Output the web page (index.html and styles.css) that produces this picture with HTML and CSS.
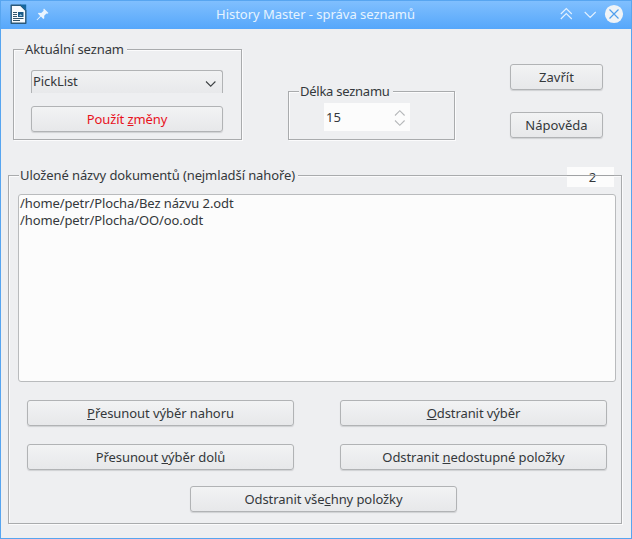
FILE: index.html
```html
<!DOCTYPE html>
<html lang="cs">
<head>
<meta charset="utf-8">
<title>History Master - správa seznamů</title>
<link rel="stylesheet" href="styles.css">
</head>
<body>
<div class="window">
  <header class="titlebar">
    <svg class="app-icon" width="17" height="21" viewBox="0 0 17 21">
      <path d="M1.200 1.200H10.500L15.800 6.500V19.300H1.200Z" fill="#f8fbfd" stroke="#2a5878" stroke-width="1.400" stroke-linejoin="round"/>
      <path d="M10 .5H16.200V6.800Z" fill="#15679f"/>
      <path d="M3 8.500H7M3 10.500H7M3 12.500H7M3 14.500H13.500M3 16.500H10" stroke="#34566c" stroke-width="1"/>
      <rect x="8" y="8" width="5.500" height="5" fill="#1b5a85"/>
      <path d="M9 12L10.500 10L12.500 12Z" fill="#8fc0df"/>
    </svg>
    <svg class="pin" width="13" height="13" viewBox="0 0 13 13" fill="#e9f4ff">
      <path d="M8 .5L12.500 5L11.300 5.700L10.400 5.400L8.200 7.700L8.300 10.300L7.300 11L4.900 8.600L1.200 12.300L.6 11.700L4.200 7.900L1.900 5.500L2.700 4.700L5.200 4.900L7.600 2.700L7.300 1.500Z"/>
    </svg>
    <h1 class="title">History Master - správa seznamů</h1>
    <svg class="controls" width="64" height="20" viewBox="0 0 64 20" fill="none">
      <path d="M.8 10L6.300 4.500L11.800 10M.8 15L6.300 9.500L11.800 15M24.700 8L30.200 13.500L35.700 8" stroke="#e3f1ff" stroke-width="1.100"/>
      <circle cx="54" cy="10" r="9.100" fill="#eff3f7"/>
      <path d="M49.500 5.500L58.500 14.500M58.500 5.500L49.500 14.500" stroke="#519fee" stroke-width="1.200"/>
    </svg>
  </header>
  <main>
    <div class="top">
      <section class="group current">
        <h2 class="legend">Aktuální seznam</h2>
        <div class="combo"><span>PickList</span>
          <svg width="12" height="8" viewBox="0 0 12 8"><path d="M1 1.500L5.700 6.200L10.400 1.500" fill="none" stroke="#3c4043" stroke-width="1.100"/></svg>
        </div>
        <button class="btn apply">Použít <u>z</u>měny</button>
      </section>
      <section class="group length">
        <h2 class="legend">Délka seznamu</h2>
        <div class="spin"><span>15</span>
          <svg width="12" height="18" viewBox="0 0 12 18"><path d="M1 6.500L5.800 1.700L10.600 6.500M1 11.500L5.800 16.300L10.600 11.500" fill="none" stroke="#b5b7b9" stroke-width="1.100"/></svg>
        </div>
      </section>
      <div class="side">
        <button class="btn">Zavřít</button>
        <button class="btn">Nápověda</button>
      </div>
    </div>
    <section class="group stored">
      <h2 class="legend">Uložené názvy dokumentů (nejmladší nahoře)</h2>
      <output class="count">2</output>
      <ul class="list">
        <li>/home/petr/Plocha/Bez názvu 2.odt</li>
        <li>/home/petr/Plocha/OO/oo.odt</li>
      </ul>
      <div class="actions">
        <button class="btn"><u>P</u>řesunout výběr nahoru</button>
        <button class="btn"><u>O</u>dstranit výběr</button>
        <button class="btn">Přesunout <u>v</u>ýběr dolů</button>
        <button class="btn">Odstranit <u>n</u>edostupné položky</button>
      </div>
      <button class="btn all">Odstranit vše<u>c</u>hny položky</button>
    </section>
  </main>
</div>
</body>
</html>
```
FILE: styles.css
```css
* { box-sizing: border-box; }
body {
  margin: 0;
  font: 13px/17px "Noto Sans", sans-serif;
  letter-spacing: -0.1px;
  color: #34383b;
}
.window {
  width: 632px;
  height: 539px;
  background: #eeeff1;
  border: 1px solid #57a5f0;
  overflow: hidden;
}
.titlebar {
  height: 28px;
  display: flex;
  align-items: flex-start;
  background: linear-gradient(#80bffe, #56a7fb);
  color: #e6f3ff;
}
.app-icon { margin: 3px 0 0 9px; }
.pin { margin: 7px 0 0 9px; }
.title {
  flex: 1;
  margin: 4px 0 0 2px;
  padding-left: 20px;
  text-align: center;
  font-size: 13px;
  line-height: 18px;
  font-weight: 400;
  letter-spacing: -0.03px;
}
.controls { margin: 3px 7px 0 0; }
.top {
  display: flex;
  align-items: flex-start;
  height: 146px;
}
.group {
  position: relative;
  border: 1px solid #a9abad;
  box-shadow: 1px 1px #fbfbfc, inset 1px 1px #fbfbfc;
}
.legend {
  width: max-content;
  margin: -9px 0 0 10px;
  padding: 0 3px 0 1px;
  background: #eeeff1;
  font-size: 13px;
  line-height: 17px;
  font-weight: 400;
}
.current { width: 229px; height: 91px; margin: 20px 0 0 12px; }
.length { width: 167px; height: 49px; margin: 62px 0 0 46px; }
.length .legend { letter-spacing: -0.25px; }
.side {
  display: flex;
  flex-direction: column;
  gap: 21px;
  width: 93px;
  margin: 35px 0 0 55px;
}
.btn {
  display: block;
  height: 26px;
  padding: 0;
  border: 1px solid #b1b3b5;
  border-radius: 3px;
  background: linear-gradient(#f2f3f4, #e7e8ea);
  box-shadow: 0 1px 1px #cfd1d3;
  color: inherit;
  font: inherit;
  letter-spacing: -0.08px;
  text-align: center;
}
.side .btn { letter-spacing: 0.05px; }
.side { gap: 22px; }
u { text-underline-offset: 1px; text-decoration-thickness: 1px; }
.combo {
  display: flex;
  justify-content: space-between;
  width: 192px;
  height: 23px;
  margin: 12px 0 0 17px;
  padding: 2px 5px 0 1px;
  border: 1px solid #b1b3b5;
  border-bottom: 0;
  border-radius: 3px 3px 0 0;
  background: linear-gradient(#f1f2f3, #e8e9eb);
}
.combo svg { margin-top: 7px; }
.apply { width: 192px; margin: 13px 0 0 17px; color: #e8121c; }
.spin {
  display: flex;
  justify-content: space-between;
  width: 86px;
  height: 28px;
  margin: 3px 0 0 35px;
  padding: 6px 4px 0 2px;
  background: #fcfcfc;
}
.spin span { letter-spacing: 0; }
.stored { width: 614px; height: 349px; margin-left: 7px; }
.count {
  position: absolute;
  left: 558px;
  top: -9px;
  width: 47px;
  height: 20px;
  padding: 2px 0 0 4px;
  background: #fcfcfc;
  text-align: center;
}
.count::after {
  content: "";
  position: absolute;
  left: 0;
  right: 0;
  top: 8px;
  height: 1px;
  background: #a0a2a4;
}
.list {
  width: 598px;
  height: 188px;
  margin: 10px 0 0 9px;
  padding: 0 1px;
  border: 1px solid #b9bbbd;
  border-radius: 3px;
  background: #fcfcfc;
  list-style: none;
}
.actions {
  display: grid;
  grid-template-columns: 267px 267px;
  column-gap: 46px;
  row-gap: 18px;
  margin: 18px 0 0 18px;
}
.all { width: 267px; margin: 16px 0 0 181px; }
```
